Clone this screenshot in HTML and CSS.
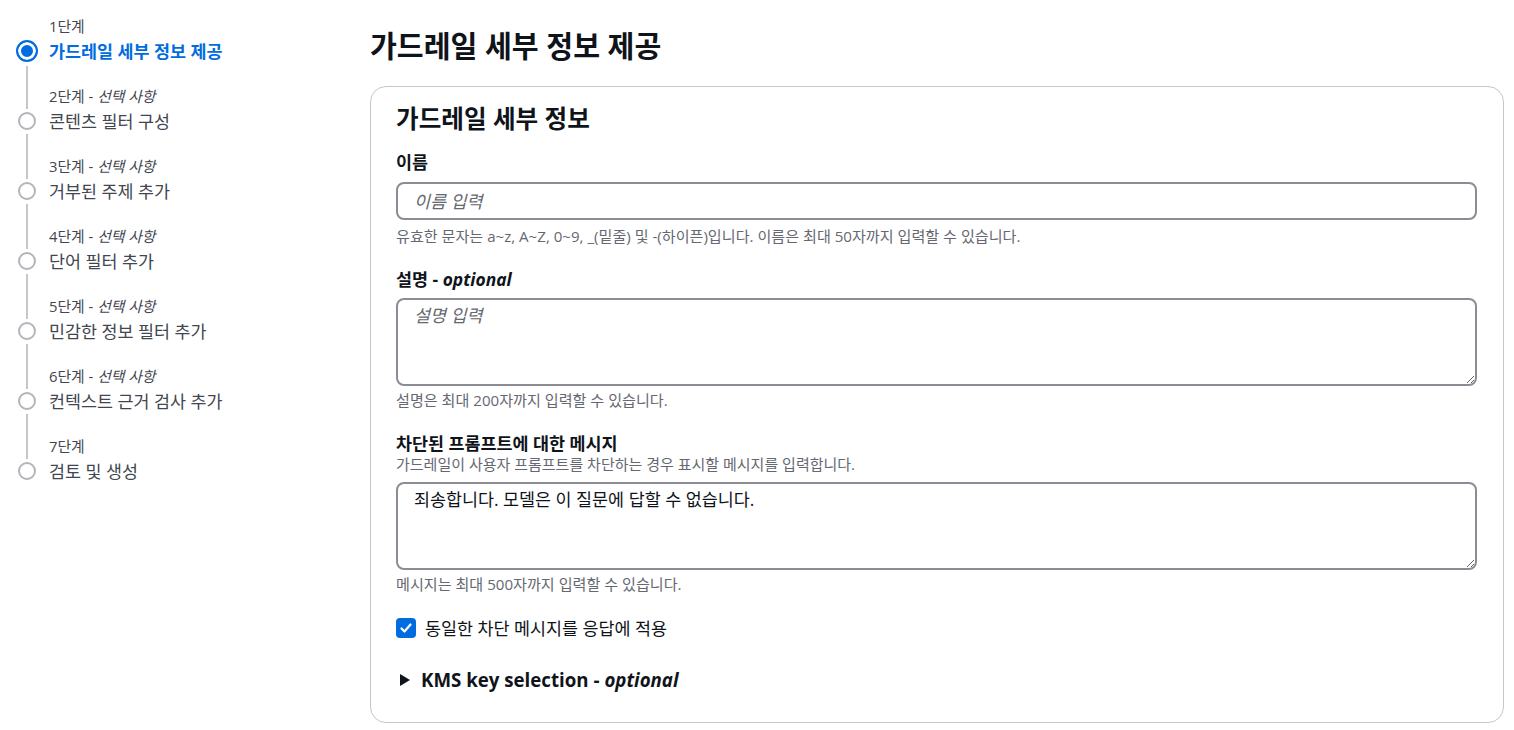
FILE: index.html
```html
<!DOCTYPE html>
<html lang="ko">
<head>
<meta charset="utf-8">
<title>가드레일 세부 정보 제공</title>
<link rel="stylesheet" href="styles.css">
</head>
<body>
<div class="page">
  <nav class="steps">
    <div class="step active">
      <div class="rail"><span class="seg seg-top none"></span><span class="dot"></span><span class="seg seg-bottom"></span></div>
      <div class="step-text"><div class="step-label">1단계</div><div class="step-title">가드레일 세부 정보 제공</div></div>
    </div>
    <div class="step">
      <div class="rail"><span class="seg seg-top"></span><span class="dot"></span><span class="seg seg-bottom"></span></div>
      <div class="step-text"><div class="step-label">2단계 - <i>선택 사항</i></div><div class="step-title">콘텐츠 필터 구성</div></div>
    </div>
    <div class="step">
      <div class="rail"><span class="seg seg-top"></span><span class="dot"></span><span class="seg seg-bottom"></span></div>
      <div class="step-text"><div class="step-label">3단계 - <i>선택 사항</i></div><div class="step-title">거부된 주제 추가</div></div>
    </div>
    <div class="step">
      <div class="rail"><span class="seg seg-top"></span><span class="dot"></span><span class="seg seg-bottom"></span></div>
      <div class="step-text"><div class="step-label">4단계 - <i>선택 사항</i></div><div class="step-title">단어 필터 추가</div></div>
    </div>
    <div class="step">
      <div class="rail"><span class="seg seg-top"></span><span class="dot"></span><span class="seg seg-bottom"></span></div>
      <div class="step-text"><div class="step-label">5단계 - <i>선택 사항</i></div><div class="step-title">민감한 정보 필터 추가</div></div>
    </div>
    <div class="step">
      <div class="rail"><span class="seg seg-top"></span><span class="dot"></span><span class="seg seg-bottom"></span></div>
      <div class="step-text"><div class="step-label">6단계 - <i>선택 사항</i></div><div class="step-title">컨텍스트 근거 검사 추가</div></div>
    </div>
    <div class="step last">
      <div class="rail"><span class="seg seg-top"></span><span class="dot"></span></div>
      <div class="step-text"><div class="step-label">7단계</div><div class="step-title">검토 및 생성</div></div>
    </div>
  </nav>

  <main class="main">
    <h1 class="page-title">가드레일 세부 정보 제공</h1>
    <section class="container">
      <h2 class="container-title">가드레일 세부 정보</h2>

      <div class="field first">
        <label class="field-label">이름</label>
        <input class="text-input" type="text" placeholder="이름 입력">
        <div class="helper">유효한 문자는 a~z, A~Z, 0~9, _(밑줄) 및 -(하이픈)입니다. 이름은 최대 50자까지 입력할 수 있습니다.</div>
      </div>

      <div class="field">
        <label class="field-label">설명 - <i>optional</i></label>
        <textarea class="text-area" placeholder="설명 입력"></textarea>
        <div class="helper tight">설명은 최대 200자까지 입력할 수 있습니다.</div>
      </div>

      <div class="field">
        <label class="field-label">차단된 프롬프트에 대한 메시지</label>
        <div class="description">가드레일이 사용자 프롬프트를 차단하는 경우 표시할 메시지를 입력합니다.</div>
        <textarea class="text-area">죄송합니다. 모델은 이 질문에 답할 수 없습니다.</textarea>
        <div class="helper tight">메시지는 최대 500자까지 입력할 수 있습니다.</div>
      </div>

      <div class="checkbox-row">
        <span class="checkbox"><svg viewBox="0 0 20 20" width="20" height="20"><polyline points="5.5,10.5 8.5,13.5 14.5,6.5" fill="none" stroke="#fff" stroke-width="2.2" stroke-linecap="round" stroke-linejoin="round"/></svg></span>
        <span class="checkbox-label">동일한 차단 메시지를 응답에 적용</span>
      </div>

      <div class="expander">
        <svg class="caret" viewBox="0 0 10 12" width="10" height="12"><polygon points="0,0 10,6 0,12" fill="#0f141a"/></svg>
        <span class="expander-title">KMS key selection - <i>optional</i></span>
      </div>
    </section>
  </main>
</div>
</body>
</html>
```

FILE: styles.css
```css
* { box-sizing: border-box; }

html, body {
  margin: 0;
  padding: 0;
  background: #ffffff;
}

body {
  font-family: "Open Sans", "Noto Sans CJK KR", sans-serif;
  color: #0f141a;
}

.page {
  display: flex;
  align-items: flex-start;
}

/* ---------- steps navigation ---------- */
.steps {
  width: 370px;
  flex: none;
  padding: 16px 0 0 4px;
  display: flex;
  flex-direction: column;
}

.step {
  display: flex;
  height: 70px;
}

.step.last { height: 50px; }

.rail {
  width: 45px;
  flex: none;
  display: flex;
  flex-direction: column;
  align-items: center;
}

.seg {
  width: 2px;
  background: #c6c6cd;
  display: block;
}

.seg-top {
  height: 23px;
  margin-bottom: 3px;
  flex: none;
}

.seg-top.none { background: transparent; }

.seg-bottom {
  flex: 1;
  margin-top: 4px;
}

.dot {
  width: 18px;
  height: 18px;
  border-radius: 50%;
  border: 2px solid #b4b4bb;
  flex: none;
  display: block;
}

.active .seg-top { height: 21px; }

.active .dot {
  width: 22px;
  height: 22px;
  border: 2px solid #006ce0;
  background: #006ce0;
  box-shadow: inset 0 0 0 3px #ffffff;
}

.step-text {
  display: flex;
  flex-direction: column;
}

.step-label {
  font-size: 14.8px;
  line-height: 20px;
  color: #424650;
}

.step-title {
  font-size: 17.4px;
  line-height: 30px;
  color: #424650;
}

.active .step-title {
  color: #006ce0;
  font-weight: 700;
}

/* ---------- main ---------- */
.main {
  flex: 1;
  min-width: 0;
  padding: 28px 10px 0 0;
}

.page-title {
  margin: 0;
  font-size: 29.2px;
  line-height: 36px;
  font-weight: 700;
}

.container {
  margin-top: 22px;
  border: 1px solid #c6c6cd;
  border-radius: 16px;
  padding: 17px 26px 30px 25px;
}

.container-title {
  margin: 0;
  font-size: 24.6px;
  line-height: 30px;
  font-weight: 700;
}

.field {
  margin-top: 22px;
  display: flex;
  flex-direction: column;
}

.field.first { margin-top: 17px; }

.field-label {
  font-size: 17.4px;
  line-height: 22px;
  font-weight: 700;
}

.field-label i { font-weight: 700; }

.description {
  font-size: 15px;
  line-height: 20px;
  color: #656871;
}

.text-input,
.text-area {
  margin-top: 8px;
  width: 100%;
  border: 2px solid #8c8c94;
  border-radius: 8px;
  font-family: "Open Sans", "Noto Sans CJK KR", sans-serif;
  font-size: 17.4px;
  color: #0f141a;
  background: #ffffff;
  outline: none;
}

.text-input {
  margin-top: 9px;
  height: 38px;
  padding: 0 16px;
}

.text-area {
  height: 88px;
  padding: 3px 16px;
  line-height: 24px;
  resize: vertical;
  display: block;
}

.text-input::placeholder,
.text-area::placeholder {
  color: #656871;
  font-style: italic;
}

.helper {
  margin-top: 6px;
  font-size: 15.1px;
  line-height: 20px;
  color: #656871;
}

.helper.tight { margin-top: 4px; }

.checkbox-row {
  margin-top: 22px;
  display: flex;
  align-items: center;
  height: 24px;
}

.checkbox {
  width: 20px;
  height: 20px;
  border-radius: 4px;
  background: #006ce0;
  flex: none;
  display: flex;
}

.checkbox-label {
  margin-left: 9px;
  font-size: 17.4px;
  line-height: 24px;
  color: #0f141a;
}

.expander {
  margin-top: 28px;
  display: flex;
  align-items: center;
  height: 24px;
}

.caret {
  margin-left: 4px;
  flex: none;
}

.expander-title {
  margin-left: 11px;
  font-size: 18.7px;
  line-height: 24px;
  font-weight: 700;
}
```
